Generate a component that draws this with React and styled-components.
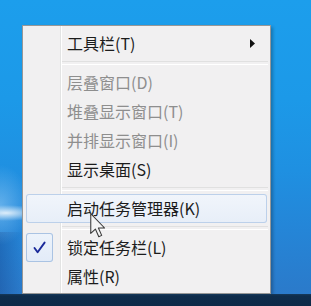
import React from "react";
import styled, { createGlobalStyle } from "styled-components";

const GlobalStyle = createGlobalStyle`
  html, body {
    margin: 0;
    padding: 0;
    width: 311px;
    height: 306px;
    overflow: hidden;
  }
  * { box-sizing: border-box; }
`;

const Desktop = styled.div`
  position: relative;
  width: 311px;
  height: 306px;
  display: flex;
  flex-direction: column;
  font-family: "Noto Sans CJK SC", "Microsoft YaHei", "Noto Sans", sans-serif;
`;

const Stage = styled.div`
  flex: 1;
  padding: 25px 0 0 22px;
  background:
    radial-gradient(ellipse 36px 8px at 6px 213px, rgba(255,255,255,0.8), rgba(255,255,255,0) 100%),
    radial-gradient(ellipse 30px 40px at 0px 205px, rgba(140,200,245,0.6), rgba(140,200,245,0) 100%),
    linear-gradient(to right, rgba(10,40,110,0.25), rgba(10,40,110,0) 22px) 0 232px / 100% 62px no-repeat,
    linear-gradient(180deg, #1c9eec 0px, #1c99e8 100px, #1f90e1 170px, #2486d8 225px, #2b7aca 294px);
`;

const Taskbar = styled.div`
  height: 12px;
  background: linear-gradient(180deg, #163a5c 0px, #0e2c4b 2px, #0d2a48 100%);
`;

const Menu = styled.div`
  width: 249px;
  height: 269px;
  border: 1px solid #979797;
  padding: 3px 0 2px;
  background:
    linear-gradient(to right,
      transparent 37px,
      #e2e3e3 37px, #e2e3e3 38px,
      #ffffff 38px, #ffffff 39px,
      transparent 39px),
    #f1f0f1;
  box-shadow: 2px 2px 3px rgba(0, 0, 0, 0.25);
  display: flex;
  flex-direction: column;
`;

const Item = styled.div`
  height: 29px;
  margin: 0 3px;
  display: flex;
  align-items: center;
  border-radius: 3px;
  font-size: 16px;
  line-height: 1;
  color: ${(p) => (p.$disabled ? "#8e8e8e" : "#1c1c1c")};
  ${(p) =>
    p.$hot &&
    `
    background: linear-gradient(180deg, #f1f5fb 0%, #e7eef8 100%);
    box-shadow: inset 0 0 0 1px #bcd0ea;
  `}
`;

const CheckSlot = styled.div`
  width: 27px;
  align-self: stretch;
  flex: none;
  display: flex;
  align-items: center;
  justify-content: center;
  border-radius: 3px;
  ${(p) =>
    p.$checked &&
    `
    background: linear-gradient(180deg, #edf3fb 0%, #e2ebf8 100%);
    box-shadow: inset 0 0 0 1px #aac3e3;
  `}
`;

const Label = styled.span`
  margin-left: 14px;
  white-space: nowrap;
  position: relative;
  top: -1px;
`;

const SubArrow = styled.svg`
  margin-left: auto;
  margin-right: 12px;
  flex: none;
`;

const Separator = styled.div`
  height: 10px;
  display: flex;
  align-items: center;
  padding: 0 2px 0 39px;
  &::after {
    content: "";
    flex: 1;
    height: 2px;
    border-top: 1px solid #e0e0e0;
    border-bottom: 1px solid #ffffff;
  }
`;

const Cursor = styled.svg`
  position: absolute;
  left: 90px;
  top: 213px;
  pointer-events: none;
`;

const CheckMark = () => (
  <svg width="13" height="13" viewBox="0 0 13 13">
    <path
      d="M1.5 7 L4.6 11.2 L11.6 1.6"
      fill="none"
      stroke="#1b2a9a"
      strokeWidth="1.9"
      strokeLinecap="round"
      strokeLinejoin="round"
    />
  </svg>
);

const items = [
  { label: "工具栏(T)", sub: true },
  { sep: true },
  { label: "层叠窗口(D)", disabled: true },
  { label: "堆叠显示窗口(T)", disabled: true },
  { label: "并排显示窗口(I)", disabled: true },
  { label: "显示桌面(S)" },
  { sep: true },
  { label: "启动任务管理器(K)", hot: true },
  { sep: true },
  { label: "锁定任务栏(L)", checked: true },
  { label: "属性(R)" },
];

export default function App() {
  return (
    <>
      <GlobalStyle />
      <Desktop>
        <Stage>
          <Menu>
            {items.map((it, i) =>
              it.sep ? (
                <Separator key={i} />
              ) : (
                <Item key={i} $disabled={it.disabled} $hot={it.hot}>
                  <CheckSlot $checked={it.checked}>
                    {it.checked && <CheckMark />}
                  </CheckSlot>
                  <Label>{it.label}</Label>
                  {it.sub && (
                    <SubArrow width="5" height="9" viewBox="0 0 5 9">
                      <polygon points="0,0 5,4.5 0,9" fill="#111" />
                    </SubArrow>
                  )}
                </Item>
              )
            )}
          </Menu>
        </Stage>
        <Taskbar />
        <Cursor width="16" height="25" viewBox="0 0 12 19">
          <polygon
            points="0.5,0.5 0.5,15.5 4,12.2 6.6,18 8.8,17 6.3,11.4 11,11.4"
            fill="#f4f4f4"
            stroke="#3a3a3a"
            strokeWidth="0.8"
            strokeLinejoin="round"
          />
        </Cursor>
      </Desktop>
    </>
  );
}
